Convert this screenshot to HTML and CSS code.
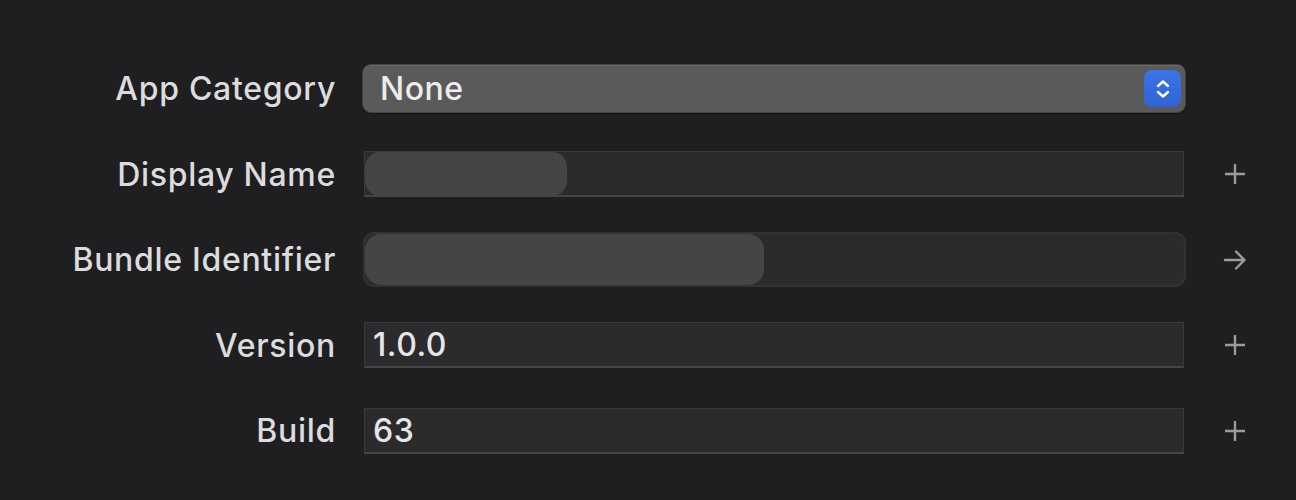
FILE: index.html
```html
<!DOCTYPE html>
<html>
<head>
<meta charset="utf-8">
<link rel="stylesheet" href="styles.css">
</head>
<body>
<div class="form">
  <div class="label">App Category</div>
  <div class="popup">
    <span class="popup-text">None</span>
    <span class="stepper">
      <svg width="20" height="24" viewBox="0 0 20 24"><path d="M5 9 L10 4.5 L15 9 M5 15 L10 19.5 L15 15" fill="none" stroke="#fff" stroke-width="2.4" stroke-linecap="round" stroke-linejoin="round"/></svg>
    </span>
  </div>
  <div class="action"></div>

  <div class="label">Display Name</div>
  <div class="field square"><span class="pill short"></span></div>
  <div class="action"><svg width="22" height="22" viewBox="0 0 22 22"><path d="M11 1 V21 M1 11 H21" stroke="#9c9c9e" stroke-width="2.4" fill="none"/></svg></div>

  <div class="label">Bundle Identifier</div>
  <div class="field round"><span class="pill long"></span></div>
  <div class="action"><svg width="24" height="22" viewBox="0 0 24 22"><path d="M2 11 H21.5 M13 2.5 L21.5 11 L13 19.5" stroke="#9c9c9e" stroke-width="2.4" fill="none" stroke-linecap="round" stroke-linejoin="round"/></svg></div>

  <div class="label">Version</div>
  <div class="field square"><span class="value">1.0.0</span></div>
  <div class="action"><svg width="22" height="22" viewBox="0 0 22 22"><path d="M11 1 V21 M1 11 H21" stroke="#9c9c9e" stroke-width="2.4" fill="none"/></svg></div>

  <div class="label">Build</div>
  <div class="field square"><span class="value">63</span></div>
  <div class="action"><svg width="22" height="22" viewBox="0 0 22 22"><path d="M11 1 V21 M1 11 H21" stroke="#9c9c9e" stroke-width="2.4" fill="none"/></svg></div>
</div>
</body>
</html>
```

FILE: styles.css
```css
html, body {
  margin: 0;
  padding: 0;
  background: #1f1f21;
  height: 500px;
  overflow: hidden;
}
body {
  font-family: Inter, "Noto Sans", sans-serif;
  color: #dededf;
}
.form {
  display: grid;
  grid-template-columns: 335px 824px 44px;
  grid-auto-rows: 85.5px;
  column-gap: 27px;
  align-items: center;
  padding-top: 46px;
}
.label {
  text-align: right;
  font-size: 32px;
  font-weight: 500;
  letter-spacing: 0.7px;
  color: #dcdcdd;
  white-space: nowrap;
  margin-right: -1px;
}
.popup {
  height: 49px;
  box-sizing: border-box;
  background: #5a5a5b;
  border-radius: 9px;
  border: 1px solid #444446;
  box-shadow: inset 0 1px 0 #6a6a6b, 0 1px 2px rgba(0,0,0,0.4);
  display: flex;
  align-items: center;
  justify-content: space-between;
  padding: 0 4px 0 17px;
}
.popup-text {
  font-size: 32px;
  font-weight: 500;
  letter-spacing: 0.5px;
  color: #ececec;
}
.stepper {
  width: 37px;
  height: 37px;
  border-radius: 8px;
  background: linear-gradient(#3c74e6, #2f62d6);
  display: flex;
  align-items: center;
  justify-content: center;
}
.field {
  box-sizing: border-box;
  background: #2b2b2d;
  display: flex;
  align-items: center;
  margin-left: 2px;
  margin-right: 2px;
}
.field.square {
  height: 46px;
  border: 1px solid #3a3a3c;
  border-bottom: 2px solid #454547;
}
.field.round {
  height: 55px;
  border: 2px solid #323234;
  border-radius: 11px;
  margin-left: 1px;
  margin-right: 0;
}
.pill {
  background: #454546;
  display: block;
}
.pill.short {
  width: 202px;
  height: 44px;
  border-radius: 15px;
}
.pill.long {
  width: 399px;
  height: 51px;
  border-radius: 16px;
}
.value {
  font-size: 32px;
  font-weight: 500;
  letter-spacing: 0.5px;
  color: #e6e6e6;
  padding-left: 8px;
}
.action {
  display: flex;
  align-items: center;
  justify-content: center;
  height: 30px;
}
```
